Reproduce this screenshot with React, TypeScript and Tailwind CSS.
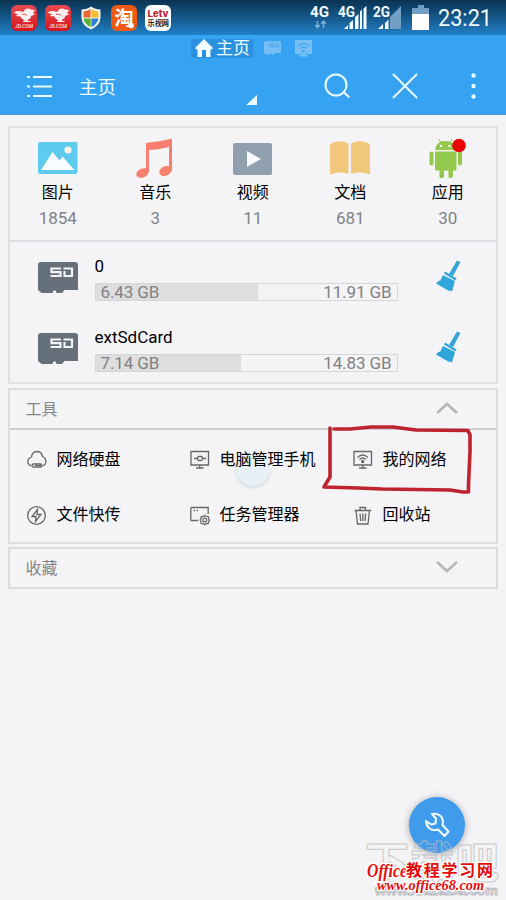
import React from "react";

const JdIcon = () => (
  <svg className="h-[26px] w-[26px]" viewBox="0 0 26 26">
    <defs>
      <linearGradient id="jd" x1="0" y1="0" x2="0" y2="1">
        <stop offset="0" stopColor="#e84b50" />
        <stop offset="1" stopColor="#d5141c" />
      </linearGradient>
    </defs>
    <rect width="26" height="26" rx="6" fill="url(#jd)" />
    <path d="M2.500 7.500Q7 5 12 7L14 4.500Q17 2.500 20 4.500L24 5 22 8 24 9.500 20 11Q20 14 17 14.500V16H19.500V17H12V16L14 15.500Q10 14 9.500 11.500L4.500 11 7 9.500z" fill="#fbeeee" />
    <path d="M11 9.500l3-.5 2 1.500" fill="none" stroke="#d95a60" />
    <text x="4" y="22.500" textLength="18" lengthAdjust="spacingAndGlyphs" fontSize="6" fontWeight="500" fill="#ffe4e4" fontFamily="Roboto, sans-serif">JD.COM</text>
  </svg>
);

const ShieldIcon = () => (
  <svg className="h-[24px] w-[20px]" viewBox="0 0 20 24">
    <path d="M10 .5Q14 3.500 19.500 3.500V12Q19 19.500 10 23.500 1 19.500.5 12V3.500Q6 3.500 10 .5z" fill="#f1f5ee" />
    <path d="M9.600 3Q6 5.300 2.500 5.500V11.600H9.600z" fill="#ea6a2c" />
    <path d="M10.400 3Q14 5.300 17.500 5.500V11.600H10.400z" fill="#f4bd35" />
    <path d="M2.500 12.400H9.600V21Q3.400 18 2.500 12.400z" fill="#57af36" />
    <path d="M17.500 12.400H10.400V21Q16.600 18 17.500 12.400z" fill="#2f80cb" />
  </svg>
);

const TaobaoIcon = () => (
  <svg className="h-[26px] w-[26px]" viewBox="0 0 26 26">
    <rect width="26" height="26" rx="6" fill="#ee5a12" />
    <text x="13" y="19.500" textAnchor="middle" fontSize="19" fontWeight="700" fill="#fff" fontFamily="Noto Sans CJK SC, sans-serif">淘</text>
    <circle cx="20" cy="20.500" r="2.800" fill="#fff" />
  </svg>
);

const LetvIcon = () => (
  <svg className="h-[26px] w-[26px]" viewBox="0 0 26 26">
    <rect width="26" height="26" rx="6" fill="#fff" />
    <text x="2.500" y="12" textLength="21" lengthAdjust="spacingAndGlyphs" fontSize="9.500" fontWeight="800" fill="#c22633" fontFamily="Inter, sans-serif">Letv</text>
    <text x="2.500" y="21" textLength="21.500" lengthAdjust="spacingAndGlyphs" fontSize="7.500" fontWeight="700" fill="#222" fontFamily="Noto Sans CJK SC, sans-serif">乐视网</text>
  </svg>
);

const StatusIndicators = () => (
  <svg className="h-[35px] w-[196px]" viewBox="310 0 196 35" fontFamily="Roboto, sans-serif" fill="#f1fbff">
    <text x="310" y="17" fontSize="15.500" fontWeight="700" textLength="19" lengthAdjust="spacingAndGlyphs">4G</text>
    <path d="M317.500 21v6M315.300 25l2.200 2.800 2.200-2.800M323.500 28v-6M321.300 23.800l2.200-2.800 2.200 2.800" fill="none" stroke="#79b1da" strokeWidth="1.500" />
    <path d="M344 29l4-4v4zM349.500 23l3.500-3v9h-3.500zM355 17l3.500-3v15H355zM360 11.500l2-2V29h-2zM363.500 8.500l3-2.500v23h-3z" />
    <text x="338" y="17" fontSize="14.500" fontWeight="700" textLength="17" lengthAdjust="spacingAndGlyphs">4G</text>
    <path d="M401 6v23h-11V17z" fill="#719fc5" />
    <text x="373" y="17" fontSize="14.500" fontWeight="700" textLength="17" lengthAdjust="spacingAndGlyphs">2G</text>
    <path d="M378 29l5-5v5zM385 23l3.500-3.500V29H385z" />
    <path d="M418 5h6v3h5v7h-17V8h6z" fill="#719fc5" />
    <path d="M412 14h17v16h-17z" fill="#fff" />
    <text x="438" y="26" fontSize="24" fontWeight="400" textLength="54" lengthAdjust="spacingAndGlyphs">23:21</text>
  </svg>
);

const SdIcon = ({ className, color, hole }: { className: string; color: string; hole: string }) => (
  <svg className={className} viewBox="0 0 40 32" fill="none">
    <path d="M3 0H37Q40 0 40 3V28H26.500L24 31H18.500L17.500 28.500H15.500L14.500 31H3.500L0 28V3Q0 0 3 0z" fill={color} />
    <path d="M23 6.500H13.500V10.200H22.500V14H12.500M25.500 6.500H34V14H26.500V9" stroke={hole} strokeWidth="2.200" />
  </svg>
);

const Broom = () => (
  <svg className="h-[34px] w-[27px]" viewBox="0 0 27 34">
    <path d="M22 1.500l3.500 1.500-7.500 14-4-2z" fill="#34a5d6" />
    <path d="M9.500 13.500l11.500 7" stroke="#34a5d6" strokeWidth="2.200" />
    <path d="M8 16l12 6-3 10.500-2-1-1 .5L1 24.500l3-3 1 .5z" fill="#2fa5d8" />
  </svg>
);

const categoryIcons = {
  image: (
    <svg className="h-10 w-10" viewBox="0 0 40 40">
      <rect y="4" width="39.500" height="32" rx="2" fill="#5dcaee" />
      <path d="M3 32L14.500 14l7 8.500 3-4L36.500 32z" fill="#f7fcff" />
      <circle cx="30" cy="12" r="3.600" fill="#fff4e4" />
    </svg>
  ),
  music: (
    <svg className="h-10 w-10" viewBox="0 0 40 40" fill="#f6806d">
      <path d="M11 5Q24 4 37 .5V8Q25 12 11 12z" />
      <path d="M11 5h3v29h-3zM34 2h3v31h-3z" />
      <ellipse cx="7.500" cy="35" rx="6.500" ry="4.400" transform="rotate(-25 7.500 35)" />
      <ellipse cx="30.500" cy="33" rx="6.500" ry="4.700" transform="rotate(-25 30.500 33)" />
    </svg>
  ),
  video: (
    <svg className="h-10 w-10" viewBox="0 0 40 40">
      <rect y="5" width="39" height="32" rx="2" fill="#8f9fae" />
      <path d="M14 13v16L28 21z" fill="#f7f9ff" />
    </svg>
  ),
  book: (
    <svg className="h-10 w-10" viewBox="0 0 40 40" fill="#f0c77b">
      <path d="M0 6Q8.500 1 18.500 5.500V36Q10 33 0 36.500zM21 5.500Q31 1 40 6V36.500Q30 33 21 36z" />
    </svg>
  ),
  android: (
    <svg className="h-10 w-10" viewBox="0 0 40 40" fill="#92c84b">
      <path d="M7 12Q8 3 17.500 3T28 12zM7 13.500H28.500V31Q28.500 32.500 27 32.500H25V38.500Q25 40 22.500 40T20.500 38V32.500H16V38.500Q16 40 13.500 40T11.500 38V32.500H9Q7 32.500 7 31z" />
      <rect x="1.500" y="13.500" width="4" height="14" rx="2" />
      <rect x="30" y="13.500" width="4" height="14" rx="2" />
      <path d="M11 1l2 4M24 1l-2 4" stroke="#92c84b" />
      <circle cx="13" cy="8" r="1.200" fill="#fff" />
      <circle cx="21.500" cy="8" r="1.200" fill="#fff" />
      <circle cx="31" cy="7.500" r="6.800" fill="#ea0505" />
    </svg>
  ),
};

const MonitorFrame = () => <path d="M1 1.500H18.500V15H1zM9.700 15v3M6 18h7.500" />;

const toolIcons = {
  cloud: (
    <>
      <path d="M4 16Q.8 14 .8 11.500 1 8 4.500 7 5 1.700 10 1.500 14.500 1.500 15.500 6.500 19 8 19 12 18.500 15 16 16" />
      <rect x="5" y="14" width="10" height="3" rx="1.500" />
      <path d="M8 15.500h6" strokeWidth="1" />
    </>
  ),
  pc: (
    <>
      <MonitorFrame />
      <path d="M4 8.500H8M12 8.500h4" />
      <rect x="7.500" y="6.500" width="5" height="4" rx="1.500" />
    </>
  ),
  wifi: (
    <>
      <MonitorFrame />
      <path d="M4.500 7.500Q9.700 2.500 15 7.500M6.500 9.500Q9.700 6.500 13 9.500" />
      <circle cx="9.700" cy="11.500" r="1" fill="#666" />
    </>
  ),
  flash: (
    <>
      <circle cx="9.500" cy="9.500" r="8.800" />
      <path d="M10.500 3.500L5 10.500H9L8.500 15.500 14 8.500H10z" />
    </>
  ),
  tasks: (
    <>
      <path d="M8 14.500H1.500Q.8 14.500.8 13.500V2.500Q.8 1.500 1.500 1.500H18.200V8" />
      <path d="M3.500 4.500h1.500M6.500 4.500H8" strokeWidth="1.600" />
      <path d="M14.800 9.300l1.400 1.100 2.100.1.300 2 .9 1.600-.9 1.600-.4 1.900-2 .1-1.400 1.100-1.500-1.100-2-.1-.3-2-.9-1.500.9-1.600.3-1.900 2.100-.1z" />
      <circle cx="14.800" cy="14" r="1.900" />
    </>
  ),
  trash: (
    <>
      <path d="M1.500 4.500H18M7 4V1.500h5.500V4M3 4.500L4.500 18H15L16.500 4.500M7 7.500l.7 7.500M9.800 7.500V15M12.600 7.500L12 15" />
    </>
  ),
};

const categories = [
  { name: "图片", count: "1854", icon: categoryIcons.image },
  { name: "音乐", count: "3", icon: categoryIcons.music },
  { name: "视频", count: "11", icon: categoryIcons.video },
  { name: "文档", count: "681", icon: categoryIcons.book },
  { name: "应用", count: "30", icon: categoryIcons.android },
];

const storages = [
  { name: "0", used: "6.43 GB", total: "11.91 GB", pct: 54 },
  { name: "extSdCard", used: "7.14 GB", total: "14.83 GB", pct: 48.2 },
];

const tools = [
  { name: "网络硬盘", icon: toolIcons.cloud },
  { name: "电脑管理手机", icon: toolIcons.pc },
  { name: "我的网络", icon: toolIcons.wifi },
  { name: "文件快传", icon: toolIcons.flash },
  { name: "任务管理器", icon: toolIcons.tasks },
  { name: "回收站", icon: toolIcons.trash },
];

const SectionHeader = ({ title, open }: { title: string; open?: boolean }) => (
  <div className="flex h-[38px] items-center justify-between pl-[15.5px] pr-[38px] text-base text-[#858587]">
    <span className="pt-px">{title}</span>
    <svg className="mb-[3px] h-3 w-[22px]" viewBox="0 0 22 12" fill="none" stroke="#b5b5b7" strokeWidth="2.500">
      <path d={open ? "M1 11L11 2 21 11" : "M1 1L11 10 21 1"} />
    </svg>
  </div>
);

export default function App() {
  return (
    <div className="relative h-[900px] w-[506px] overflow-hidden bg-[#f4f4f6] font-['Roboto','Noto_Sans_CJK_SC',sans-serif] text-black">
      <div className="flex h-[35px] items-center justify-between bg-linear-to-b from-[#0a3351] to-[#2180c8] pl-[11px]">
        <div className="flex items-center gap-2 pt-px">
          <JdIcon />
          <JdIcon />
          <div className="flex w-[24px] justify-center"><ShieldIcon /></div>
          <TaobaoIcon />
          <LetvIcon />
        </div>
        <StatusIndicators />
      </div>

      <header className="h-20 border-b border-[#5795c9] bg-[#35a2f2] text-[#ecfbff]">
        <div className="flex h-[26px] items-center pl-[191px]">
          <div className="flex h-[19px] w-[62px] items-center gap-[3px] bg-[#2b91de] pl-1">
            <svg className="h-[18px] w-[18px] shrink-0" viewBox="0 0 18 18" fill="#f3fdff">
              <path d="M9 0l9 9-1.500 1.500-1-.5V18H11V11H7v7H2.500V10l-1 .5L0 9z" />
            </svg>
            <span className="whitespace-nowrap text-[17px] leading-[19px]">主页</span>
          </div>
          <SdIcon className="ml-[11px] h-[14px] w-[17px]" color="#75bff5" hole="#45a7ee" />
          <svg className="ml-[14px] h-[18px] w-[17px]" viewBox="0 0 17 18" fill="none" stroke="#45a7ee">
            <path d="M0 1h17v14h-7v1h3v1.500H4V16h3v-1H0z" fill="#75bff5" stroke="none" />
            <path d="M3 7q5.500-5 11 0M5.500 9.500q3-3 6 0" strokeWidth="1.300" />
            <circle cx="8.500" cy="12" r="1" fill="#45a7ee" />
          </svg>
        </div>
        <div className="flex h-[50px] items-center pl-[26px]">
          <svg className="h-[23px] w-[26px]" viewBox="0 0 26 23" stroke="currentColor" strokeWidth="2">
            <path d="M1 2h3M7 2h19M1 11.500h3M7 11.500h19M1 21h3M7 21h19" />
          </svg>
          <span className="ml-[27px] w-[37px] whitespace-nowrap pt-1 text-[18.5px] leading-6">主页</span>
          <svg className="ml-[130px] mt-[28px] h-[10px] w-[11px]" viewBox="0 0 11 10" fill="currentColor">
            <path d="M11 0v10H0z" />
          </svg>
          <svg className="ml-[67px] h-[26px] w-[27px]" viewBox="0 0 27 26" fill="none" stroke="currentColor" strokeWidth="2">
            <circle cx="12" cy="12" r="10.500" />
            <path d="M19 18.500l6.500 6" />
          </svg>
          <svg className="ml-[41px] h-[26px] w-[26px]" viewBox="0 0 26 26" stroke="currentColor" strokeWidth="2">
            <path d="M1 1l24 24M25 1L1 25" />
          </svg>
          <svg className="ml-[53px] h-[26px] w-[5px]" viewBox="0 0 5 26" fill="currentColor">
            <circle cx="2.500" cy="2.500" r="2.200" />
            <circle cx="2.500" cy="13" r="2.200" />
            <circle cx="2.500" cy="23.500" r="2.200" />
          </svg>
        </div>
      </header>

      <main className="flex flex-col gap-1 px-2 pt-[11px]">
        <section className="h-[258px] border-2 border-[#dfe1e4]">
          <div className="-ml-px grid h-[114px] grid-cols-[repeat(5,97.5px)] border-b-2 border-[#d9dce0]">
            {categories.map((c) => (
              <div key={c.name} className="flex flex-col items-center pt-[10px]">
                {c.icon}
                <span className="mt-[5px] text-base leading-5">{c.name}</span>
                <span className="mt-[5px] text-[17px] leading-5 text-[#818184]">{c.count}</span>
              </div>
            ))}
          </div>
          {storages.map((s) => (
            <div key={s.name} className="flex h-[71px] pl-7">
              <SdIcon className="mt-5 h-8 w-10" color="#66707b" hole="#f4f4f6" />
              <div className="ml-[16.5px] w-[303px] pt-[11.5px]">
                <div className="text-[17px] leading-6">{s.name}</div>
                <div className="relative mt-[5px] h-[18px] border border-[#d5d5d7]">
                  <div className="h-full bg-[#dedede]" style={{ width: `${s.pct}%` }} />
                  <div className="absolute inset-0 flex items-center justify-between px-[5px] text-[17px] leading-4 tracking-[-0.1px] text-[#818183]">
                    <span>{s.used}</span>
                    <span>{s.total}</span>
                  </div>
                </div>
              </div>
              <div className="ml-[37.5px] mt-[17px]"><Broom /></div>
            </div>
          ))}
        </section>

        <section className="h-[156px] border-2 border-[#dadcde]">
          <SectionHeader title="工具" open />
          <div className="relative grid h-[114px] grid-cols-[163px_163px_1fr] grid-rows-2 border-t-2 border-[#cdcfd1] pt-px">
            <div className="absolute left-[226px] top-[22px] h-[34px] w-[34px] rounded-full bg-[#e7f0f4] shadow-[0_2px_3px_rgba(100,120,130,0.22)]" />
            {tools.map((t) => (
              <div key={t.name} className="relative flex items-center gap-[10px] whitespace-nowrap pl-[17px] pt-0.5 text-base">
                <svg className="h-[19px] w-5 shrink-0 overflow-visible" viewBox="0 0 20 19" fill="none" stroke="#666" strokeWidth="1.300">
                  {t.icon}
                </svg>
                <span className="-ml-[0.5px]">{t.name}</span>
              </div>
            ))}
          </div>
        </section>

        <section className="-mt-px h-[42px] border-2 border-[#dadcde]">
          <SectionHeader title="收藏" />
        </section>
      </main>

      <svg className="absolute left-[318px] top-[420px] h-[80px] w-[160px]" viewBox="318 420 160 80" fill="none" stroke="#be242d" strokeWidth="3.600" strokeLinecap="round" strokeLinejoin="round">
        <path d="M330 428V477L324 487 358 488 382 489 450 490 463 492H468.500L468.500 484 470 452V435L468 430.500 416 430 393 427H371L350 429H334" />
      </svg>

      <div className="absolute left-[409px] top-[797px] flex h-14 w-14 items-center justify-center rounded-full bg-[#409bed] shadow-[0_1px_7px_rgba(50,50,50,0.4)]">
        <svg className="h-[26px] w-[26px]" viewBox="0 0 26 26" fill="none" stroke="#f0fcff" strokeWidth="2" strokeLinejoin="round">
          <path d="M8 2Q15 1 18 6 19.500 9 18.500 13L24.500 19.500 20.500 24 14 17.500Q9 19.500 5 16 2 13 2 9L7 12.500 11.500 11.500 12 6.500z" />
        </svg>
      </div>

      <svg className="absolute left-[356px] top-[826px] h-[74px] w-[150px]" viewBox="356 826 150 74">
        <g fill="none" stroke="#b9bbbd" strokeWidth="1" fontFamily="Noto Sans CJK SC, sans-serif" fontWeight="700">
          <text x="365" y="879" fontSize="44" textLength="134" opacity=".75">下载吧</text>
          <text x="375" y="895" fontSize="13" textLength="123" lengthAdjust="spacingAndGlyphs" fontFamily="Liberation Sans, sans-serif">www.xiazaiba.com</text>
        </g>
        <g fill="#e30b09" stroke="#fff" strokeWidth="2.500" paintOrder="stroke" strokeLinejoin="round">
          <text x="367" y="877" fontSize="18" fontWeight="700" fontStyle="italic" textLength="40" lengthAdjust="spacingAndGlyphs" fontFamily="Liberation Serif, serif">Office</text>
          <text x="406" y="876" fontSize="16" fontWeight="700" textLength="87" fontFamily="Noto Sans CJK SC, sans-serif">教程学习网</text>
          <text x="377" y="890" fontSize="14" fontWeight="700" fontStyle="italic" textLength="107" lengthAdjust="spacingAndGlyphs" fontFamily="Liberation Serif, serif">www.office68.com</text>
        </g>
      </svg>
    </div>
  );
}
